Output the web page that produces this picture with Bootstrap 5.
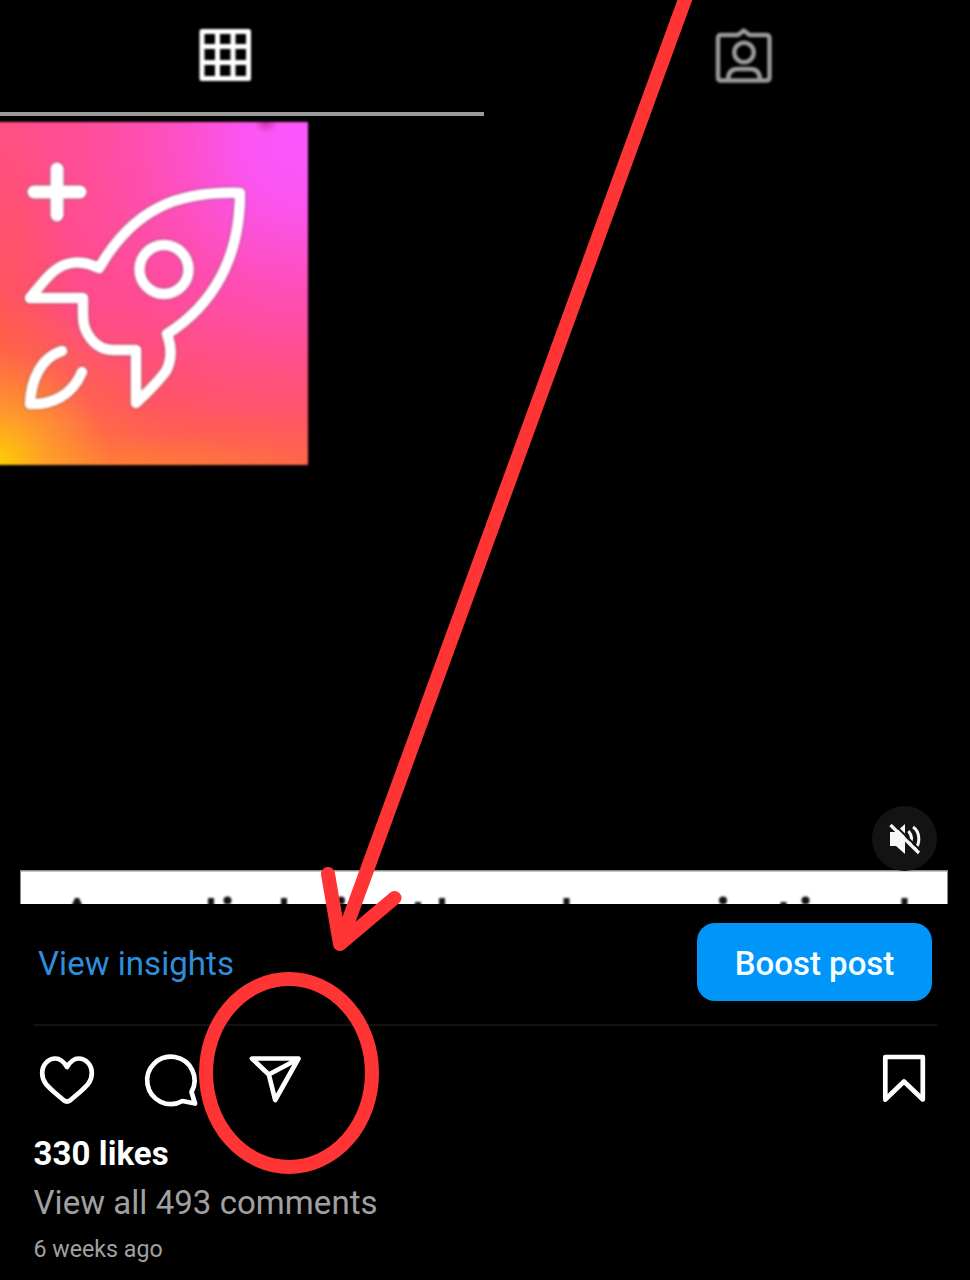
<!DOCTYPE html>
<html lang="en" data-bs-theme="dark">
<head>
<meta charset="utf-8">
<meta name="viewport" content="width=device-width, initial-scale=1">
<title>Post</title>
<link href="https://cdn.jsdelivr.net/npm/bootstrap@5.3.0/dist/css/bootstrap.min.css" rel="stylesheet">
<style>
body{background:#000;font-family:Roboto,sans-serif;color:#fff}
.screen{width:970px;height:1280px;background:#000}
.tabs{height:122px}
.tab-cell{height:112px}
.tab-line{width:484px;height:4px;background:#999;filter:blur(.7px)}
.soft{filter:blur(.9px)}
.tile{width:312.500px;height:343px;margin-left:-5px;padding-left:5px;overflow:hidden;filter:blur(.8px);
background:
radial-gradient(ellipse 12px 10px at 271px 1px,rgba(190,40,150,.75),transparent),
radial-gradient(ellipse 170px 170px at 0% 100%,#ffd000 0%,rgba(255,170,35,.75) 32%,rgba(255,125,50,.3) 68%,transparent 100%),
radial-gradient(ellipse 420px 60px at 40% 100%,rgba(255,132,45,.85) 0%,rgba(255,110,65,.5) 50%,transparent 100%),
radial-gradient(ellipse 85px 260px at 0% 66%,rgba(255,90,65,.75),transparent),
radial-gradient(ellipse 300px 310px at 98% 6%,#fb57ff 0%,rgba(251,85,248,.92) 20%,rgba(253,80,205,.68) 48%,rgba(255,78,165,.35) 75%,transparent 100%),
linear-gradient(#ff4f8c 0%,#ff4a88 50%,#ff5560 82%)}
.stage{height:405px}
.mute{width:65px;height:65px;right:33px;bottom:-1px;background:#131313}
.caption-strip{height:34px;margin-left:20px;width:928px}
.promo{height:122px;margin:0 33px;border-bottom:2px solid #121212;padding:0 5px}
.promo .link-text{font-size:33px;line-height:120px;color:#2f8edb;letter-spacing:.05px}
.boost{width:235px;height:78px;border-radius:18px;background:#0095f9;color:#f4fdff;font-size:33px;font-weight:500;line-height:1;padding:2px 0 0;border:0;margin-top:-4px}
.boost:hover{background:#0095f9;color:#fff}
.actions{height:103px;padding:0 42px 0 37px}
.post-meta{padding-left:33.500px}
.likes{font-size:33px;line-height:49px;font-weight:700;letter-spacing:.08px}
.comments{font-size:33px;line-height:49px;color:#a0a0a0;letter-spacing:.05px}
.age{font-size:23.200px;line-height:44px;color:#a0a0a0}
.annotation{left:0;top:0;pointer-events:none}
</style>
</head>
<body>
<main class="screen position-relative overflow-hidden d-flex flex-column">
  <header class="tabs">
    <div class="row g-0">
      <div class="col-6 tab-cell">
        <svg class="soft d-block" width="485" height="112" fill="none" stroke="#fff" stroke-width="5">
          <path d="M202 31.500H248.500V78.500H202ZM217.500 31V79M233 31V79M201 46.500H250M201 62.500H250" stroke-linejoin="round"/>
        </svg>
      </div>
      <div class="col-6 tab-cell">
        <svg class="soft d-block" width="485" height="112" viewBox="485 0 485 112" fill="none" stroke="#999" stroke-width="4.500" stroke-linejoin="round">
          <path d="M721 35H738L743.700 30.500L749.500 35H766Q769.500 35 769.500 38.500V77Q769.500 80.500 766 80.500H721Q718 80.500 718 77V38.500Q718 35 721 35Z"/>
          <circle cx="744" cy="52.500" r="9.700"/>
          <path d="M728 80Q728 69 738 69H750Q760 69 760 80"/>
        </svg>
      </div>
    </div>
    <div class="tab-line"></div>
  </header>

  <section class="tile">
    <svg class="d-block" width="307" height="343" viewBox="0 122 307 343" fill="none" stroke="#fff" stroke-width="10.500" stroke-linecap="round" stroke-linejoin="round" style="filter:drop-shadow(0 0 1.500px rgba(90,90,90,.8))">
      <path d="M57 169V215M34 192H80" stroke-width="13"/>
      <path d="M99 268C134 208 178 191 240 193C240 258 213 305 167 334C172 348 172 360 166 371C158 382 149 391 136 403V350H114C94 350 83 332 83 316V298H30C44 281 53 268 67 264C79 261 88 263 99 268Z"/>
      <circle cx="164" cy="269.500" r="24.500"/>
      <path d="M62 351C40 358 31 381 30 404C51 405 72 396 82 372"/>
    </svg>
  </section>

  <section class="stage position-relative">
    <div class="mute rounded-circle position-absolute">
      <svg class="d-block" width="65" height="65" viewBox="872 806 65 65">
        <path d="M890 832H896L905 824V854L896 846H890Z" fill="#f7f7f7"/>
        <path d="M908.500 831Q914 838 909.500 845M913 827C920.500 832 920.500 844 914.500 849.500" fill="none" stroke="#f7f7f7" stroke-width="3"/>
        <path d="M892.500 822.500L921 851" stroke="#131313" stroke-width="2"/>
        <path d="M890.500 825L919 853" stroke="#f7f7f7" stroke-width="3.200"/>
      </svg>
    </div>
  </section>

  <section class="caption-strip">
    <svg class="d-block" width="928" height="34" viewBox="20 870 928 34">
      <rect x="20" y="870" width="928" height="34" fill="#8c8c8c"/>
      <rect x="21" y="871.500" width="926" height="33" fill="#fff"/>
      <g fill="#111" class="soft">
        <path d="M71 907L75 898H79L83 907ZM208 898h6v9h-6ZM281 898h6v9h-6ZM439 898h6v9h-6ZM563.500 898h6v9h-6ZM901.500 898h6v9h-6ZM415 902h6v5h-6ZM780.500 902h6v5h-6Z"/>
        <circle cx="227.500" cy="900.500" r="4"/><circle cx="341" cy="900.500" r="4"/><circle cx="723" cy="900.500" r="4"/><circle cx="805.500" cy="900.500" r="4"/>
      </g>
    </svg>
  </section>

  <section class="promo d-flex justify-content-between align-items-center">
    <span class="link-text">View insights</span>
    <button class="btn boost" type="button">Boost post</button>
  </section>

  <section class="actions d-flex justify-content-between align-items-start">
    <svg width="270" height="103" viewBox="37 1026 270 103" fill="none" stroke="#fff" stroke-width="4.700" stroke-linecap="round" stroke-linejoin="round">
      <path d="M67 1067C63 1060.500 59.500 1058.500 55.500 1058.500C48 1058.500 42.200 1065 42.200 1073C42.200 1082 48 1086.500 54 1092L64 1100.500Q67 1102.500 70 1100.500L80 1092C86 1086.500 91.800 1082 91.800 1073C91.800 1065 86 1058.500 78.500 1058.500C74.500 1058.500 71 1060.500 67 1067Z"/>
      <path d="M191.500 1092A23.700 23.700 0 1 0 182.500 1101L195 1103.500Z"/>
      <path d="M252 1058.500H298.500L275.200 1100L268.800 1074.500ZM268.800 1074.500L298 1059"/>
    </svg>
    <svg width="47" height="103" viewBox="881 1026 47 103" fill="none" stroke="#fff" stroke-width="4.700" stroke-linejoin="round">
      <path d="M885.300 1057H922.800V1099.500L904 1081.500L885.300 1099.500Z"/>
    </svg>
  </section>

  <section class="post-meta">
    <div class="likes"><span>330 likes</span></div>
    <div class="comments"><span>View all 493 comments</span></div>
    <div class="age"><span>6 weeks ago</span></div>
  </section>

  <svg class="annotation position-absolute" width="970" height="1280" fill="none" stroke="#ff3434" stroke-width="14" stroke-linecap="round" stroke-linejoin="round">
    <path d="M687 -6L340 944M328 874L340 944L394.500 898"/>
    <ellipse cx="289" cy="1073" rx="83" ry="94"/>
  </svg>
</main>
<script src="https://cdn.jsdelivr.net/npm/bootstrap@5.3.0/dist/js/bootstrap.bundle.min.js"></script>
</body>
</html>
